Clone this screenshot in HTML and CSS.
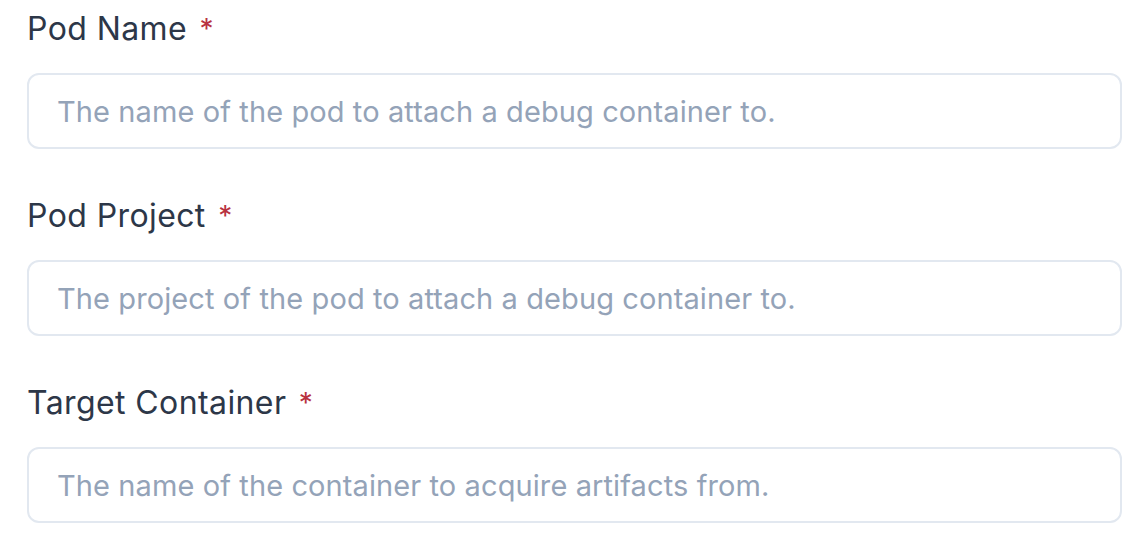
FILE: index.html
```html
<!DOCTYPE html>
<html lang="en">
  <head>
    <meta charset="UTF-8" />
    <meta name="viewport" content="width=device-width, initial-scale=1.0" />
    <title>Debug Container</title>
    <link rel="stylesheet" href="styles.css">
  </head>
  <body>
    <form class="form">
      <div class="field">
        <label for="pod-name">Pod Name <span class="required">*</span></label>
        <input type="text" id="pod-name" class="text-input" placeholder="The name of the pod to attach a debug container to." />
      </div>

      <div class="field">
        <label for="pod-project">Pod Project <span class="required">*</span></label>
        <input type="text" id="pod-project" class="text-input" placeholder="The project of the pod to attach a debug container to." />
      </div>

      <div class="field">
        <label for="target-container">Target Container <span class="required">*</span></label>
        <input type="text" id="target-container" class="text-input" placeholder="The name of the container to acquire artifacts from." />
      </div>
    </form>
  </body>
</html>
```

FILE: styles.css
```css
body {
  margin: 0;
  padding: 9px 24px 0 27px;
  background-color: #ffffff;
  font-family: Inter, Lato, sans-serif;
}
.form {
  display: flex;
  flex-direction: column;
  gap: 47px;
}
.field {
  display: flex;
  flex-direction: column;
  gap: 24px;
}
.field label {
  font-size: 32px;
  line-height: 40px;
  letter-spacing: 0.4px;
  color: #2d3748;
}
.required {
  color: #b83240;
  font-size: 28px;
  vertical-align: top;
  margin-left: 3px;
}
.text-input {
  box-sizing: border-box;
  width: 1095px;
  height: 76px;
  padding: 0 28px;
  border: 2px solid #e2e8f0;
  border-radius: 12px;
  font-family: inherit;
  font-size: 29px;
  letter-spacing: 0.1px;
  color: #2d3748;
  outline: none;
}
.text-input::placeholder {
  color: #94a3b8;
}
```
